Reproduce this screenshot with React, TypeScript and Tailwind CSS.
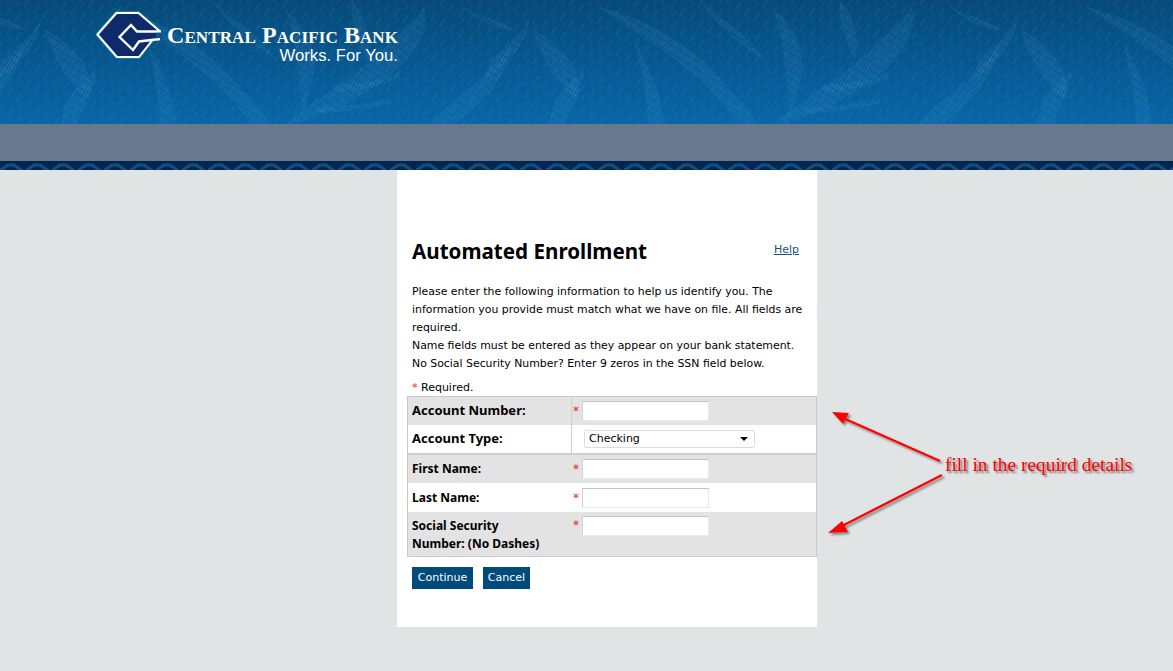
import React from 'react';

const fontBody = { fontFamily: '"DejaVu Sans", Verdana, sans-serif' };
const fontHeading = { fontFamily: '"Noto Sans", "DejaVu Sans", sans-serif' };

const leafShapes = (
  <>
    <path d="M133 30 C165 45 185 75 177 100 C160 85 140 60 133 30 Z" />
    <path d="M197 7 C240 15 290 45 315 73 C335 95 350 110 358 124 L338 124 C320 95 290 70 262 50 C240 35 215 20 197 7 Z" />
    <path d="M236 43 C250 70 262 95 264 124 L248 124 C248 95 240 70 236 43 Z" />
    <path d="M374 10 C392 25 405 45 402 75 C395 100 392 110 388 124 C390 90 385 50 374 10 Z" />
    <path d="M512 7 C520 40 490 70 450 95 C425 110 400 118 384 124 L374 124 C400 100 440 80 470 50 C490 30 505 18 512 7 Z" />
    <path d="M24 7 C32 40 2 70 -38 95 C-63 110 -88 118 -104 124 L-114 124 C-88 100 -48 80 -18 50 C2 30 17 18 24 7 Z" />
    <path d="M420 85 C445 85 470 80 488 72 L488 78 C470 86 445 92 425 92 Z" />
    <path d="M405 108 C430 106 455 104 480 98 L480 103 C455 110 430 112 405 113 Z" />
    <path d="M90 60 C110 45 125 30 130 15 C128 40 112 62 85 80 Z" />
    <path d="M30 124 C50 100 80 85 112 45 C105 80 80 105 55 124 Z" />
    <path d="M60 5 C75 15 100 20 115 30 C95 30 75 20 60 5 Z" />
    <path d="M300 0 C320 20 345 30 365 60 C340 45 315 25 300 0 Z" />
    <path d="M440 0 C455 20 460 35 455 60 C445 40 438 20 440 0 Z" />
    <path d="M150 124 C150 100 165 85 185 70 C180 95 170 110 165 124 Z" />
  </>
);

const HeaderTexture: React.FC = () => (
  <svg className="absolute inset-0 h-full w-full" aria-hidden="true">
    <defs>
      <pattern id="rain" width="11" height="17" patternUnits="userSpaceOnUse" patternTransform="rotate(32)">
        <line x1="2" y1="0" x2="2" y2="10" stroke="#3c8fca" strokeWidth="0.8" opacity="0.32" />
        <line x1="7" y1="8" x2="7" y2="15" stroke="#3c8fca" strokeWidth="0.8" opacity="0.24" />
      </pattern>
      <pattern id="hatch" width="3" height="7" patternUnits="userSpaceOnUse" patternTransform="rotate(32)">
        <line x1="1" y1="0" x2="1" y2="6" stroke="#4d9bd2" strokeWidth="1.6" opacity="0.24" />
      </pattern>
      <pattern id="leaves" x="400" width="488" height="124" patternUnits="userSpaceOnUse">
        <g fill="url(#hatch)">{leafShapes}</g>
      </pattern>
    </defs>
    <rect width="100%" height="100%" fill="url(#leaves)" />
    <rect width="100%" height="100%" fill="url(#rain)" />
  </svg>
);

const Logo: React.FC = () => (
  <svg width="66" height="50" viewBox="0 0 66 50" className="shrink-0" aria-hidden="true">
    <path d="M1.5 24.5 L20.5 3 L42.5 3 L63.5 21 L43 47 L21 47 Z" fill="#0f2a68" stroke="#1b8c95" strokeWidth="3.6" strokeLinejoin="round" />
    <path d="M1.5 24.5 L20.5 3 L42.5 3 L63.5 21 L43 47 L21 47 Z" fill="#0f2a68" stroke="#ffffff" strokeWidth="2" strokeLinejoin="round" />
    <path d="M65 21.5 L41 21.5 L35 15 L23.5 27 L37 40 L43 31.5 L64 29" fill="#0f2a68" stroke="#ffffff" strokeWidth="2.4" />
    <path d="M60 22.8 L66 22.8 L66 27.8 L60 28.2 Z" fill="#0a5486" />
  </svg>
);

const BandPattern: React.FC = () => (
  <svg className="block h-[9px] w-full" aria-hidden="true">
    <defs>
      <pattern id="band" width="26" height="9" patternUnits="userSpaceOnUse">
        <path d="M-2 11 L8 4 L14 4 L24 11" fill="none" stroke="#0f4f82" strokeWidth="3" strokeLinejoin="miter" />
      </pattern>
    </defs>
    <rect width="100%" height="100%" fill="#03264e" />
    <rect width="100%" height="100%" fill="url(#band)" />
  </svg>
);

const Star: React.FC = () => <span className="w-[8px] text-[12px] text-[#e8261c]">*</span>;

const TextInput: React.FC = () => (
  <input
    type="text"
    className="h-[20px] w-[127px] border border-t-[#c4c4c4] border-l-[#d4d4d4] border-r-[#e8e8e8] border-b-[#e8e8e8] bg-white"
  />
);

type RowProps = {
  label: React.ReactNode;
  tone: 'gray' | 'white';
  large?: boolean;
  height: string;
  divider?: boolean;
  top?: boolean;
  children: React.ReactNode;
};

const Row: React.FC<RowProps> = ({ label, tone, large, height, divider, top, children }) => (
  <div className={`flex ${height} ${tone === 'gray' ? 'bg-[#e3e3e3]' : 'bg-white'}`}>
    <div
      className={`w-[164px] shrink-0 whitespace-nowrap pl-[4px] font-bold text-black ${
        large ? 'text-[13px]' : 'text-[12px]'
      } ${top ? 'pt-[5px] leading-[18px]' : 'flex items-center'} ${divider ? 'border-r border-[#cfcfcf]' : ''}`}
      style={fontHeading}
    >
      {label}
    </div>
    <div className={`flex flex-1 gap-[1px] pl-[1px] ${top ? 'pt-[4px]' : 'items-center'}`}>{children}</div>
  </div>
);

export default function App() {
  return (
    <div className="relative min-h-[671px] overflow-hidden bg-[#e1e4e5]" style={fontBody}>
      <header className="relative h-[124px] bg-gradient-to-b from-[#064a78] to-[#0866a8]">
        <HeaderTexture />
        <div className="relative flex items-start pl-[96px] pt-[10px]">
          <Logo />
          <div className="ml-[5px] w-[232px] pt-[12px] text-right text-white">
            <div
              className="whitespace-nowrap pr-[2px] text-[24px] leading-[26px] font-bold tracking-[0.1px] [font-variant:small-caps]"
              style={{ fontFamily: '"Liberation Serif", serif' }}
            >
              Central Pacific Bank
            </div>
            <div
              className="mt-[-2px] whitespace-nowrap pr-[1px] text-[16.7px] leading-[20px]"
              style={{ fontFamily: '"Liberation Sans", sans-serif' }}
            >
              Works. For You.
            </div>
          </div>
        </div>
      </header>
      <div className="h-[37px] bg-[#69788d]" />
      <BandPattern />

      <main className="ml-[397px] h-[457px] w-[420px] bg-white">
        <div className="flex items-start justify-between pl-[15px] pr-[18px] pt-[68px]">
          <h1 className="text-[20.6px] leading-[26px] font-bold text-black" style={fontHeading}>
            Automated Enrollment
          </h1>
          <a href="#" className="pt-[4px] text-[11px] leading-[16px] text-[#1d4f7c] underline">
            Help
          </a>
        </div>
        <p className="mt-[19px] w-[410px] pl-[15px] text-[10.9px] leading-[18px] text-black">
          Please enter the following information to help us identify you. The information you provide must match
          what we have on file. All fields are required.
          <br />
          Name fields must be entered as they appear on your bank statement.
          <br />
          No Social Security Number? Enter 9 zeros in the SSN field below.
        </p>
        <p className="mt-[7px] pl-[15px] text-[11px] leading-[16px] text-black">
          <span className="text-[#e8261c]">*</span> Required.
        </p>

        <div className="ml-[10px] w-[410px] border border-[#c8c8c8]">
          <div className="border-b-2 border-[#cfcfcf]">
            <Row label="Account Number:" tone="gray" large height="h-[28px]" divider>
              <Star />
              <TextInput />
            </Row>
            <Row label="Account Type:" tone="white" large height="h-[28px]" divider>
              <div className="ml-[11px] flex h-[18px] w-[171px] items-center justify-between rounded-[2px] border border-[#dcdcdc] bg-white pl-[4px] pr-[6px] text-[11px] text-black">
                <span>Checking</span>
                <span className="h-0 w-0 border-x-[4px] border-t-[4px] border-x-transparent border-t-black" />
              </div>
            </Row>
          </div>
          <Row label="First Name:" tone="gray" height="h-[28px]">
            <Star />
            <TextInput />
          </Row>
          <Row label="Last Name:" tone="white" height="h-[29px]">
            <Star />
            <TextInput />
          </Row>
          <Row
            label={
              <>
                Social Security
                <br />
                Number: (No Dashes)
              </>
            }
            tone="gray"
            height="h-[44px]"
            top
          >
            <Star />
            <TextInput />
          </Row>
        </div>

        <div className="ml-[15px] mt-[10px] flex gap-[10px]">
          <button className="h-[22px] w-[61px] bg-[#004b7c] pt-[1px] text-[11px] text-white">Continue</button>
          <button className="h-[22px] w-[47px] bg-[#004b7c] pt-[1px] text-[11px] text-white">Cancel</button>
        </div>
      </main>

      {/* red annotation pasted over the page */}
      <svg className="absolute left-0 top-0 h-[671px] w-[1173px]" aria-hidden="true">
        <defs>
          <filter id="drop" x="-20%" y="-20%" width="140%" height="140%">
            <feDropShadow dx="2" dy="2" stdDeviation="1.2" floodColor="#555555" floodOpacity="0.7" />
          </filter>
        </defs>
        <g filter="url(#drop)">
          <path d="M940 461 L843 418" stroke="#ff0000" strokeWidth="2.4" fill="none" />
          <path d="M832 412 L849 413 L843 424 Z" fill="#ff0000" />
          <path d="M942 475 L842 526" stroke="#ff0000" strokeWidth="2.4" fill="none" />
          <path d="M828 533 L842 521 L848 532 Z" fill="#ff0000" />
        </g>
      </svg>
      <div
        className="absolute left-[945px] top-[453px] whitespace-nowrap text-[19.4px] leading-[24px] text-[#ff0000] [text-shadow:2px_2px_2px_#777777]"
        style={{ fontFamily: '"Liberation Serif", serif' }}
      >
        fill in the requird details
      </div>
    </div>
  );
}
